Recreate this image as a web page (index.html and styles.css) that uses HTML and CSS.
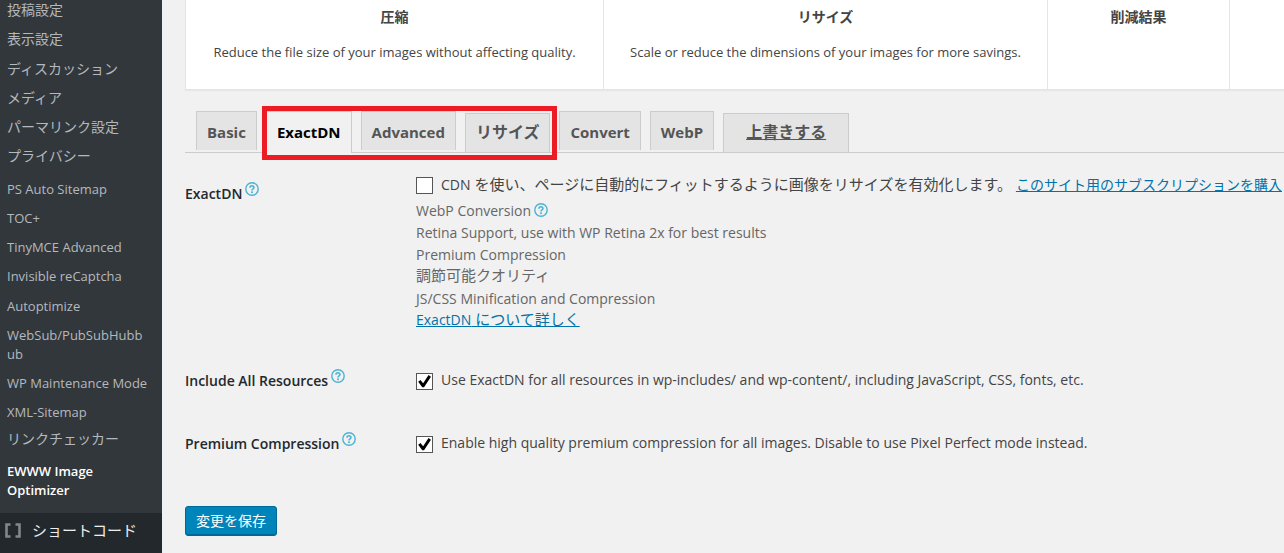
FILE: index.html
```html
<!DOCTYPE html>
<html lang="ja">
<head>
    <meta charset="UTF-8">
    <meta name="viewport" content="width=device-width, initial-scale=1.0">
    <title>EWWW Image Optimizer</title>
    <link rel="stylesheet" href="styles.css">
</head>
<body>
    <svg class="sprite" aria-hidden="true">
        <symbol id="help" viewBox="0 0 14 14">
            <circle cx="7" cy="7" r="6.2" fill="none" stroke="currentColor" stroke-width="1.4"/>
            <path d="M5 5.7C5 3.2 9 3.2 9 5.6C9 7 7 6.9 7 8.4" fill="none" stroke="currentColor" stroke-width="1.6"/>
            <rect x="6.1" y="9.4" width="1.8" height="1.7" fill="currentColor"/>
        </symbol>
    </svg>

    <div class="layout">
        <nav class="sidebar">
            <ul class="submenu">
                <li><a class="ja" href="#">投稿設定</a></li>
                <li><a class="ja" href="#">表示設定</a></li>
                <li><a class="ja" href="#">ディスカッション</a></li>
                <li><a class="ja" href="#">メディア</a></li>
                <li><a class="ja" href="#">パーマリンク設定</a></li>
                <li><a class="ja" href="#">プライバシー</a></li>
                <li><a href="#">PS Auto Sitemap</a></li>
                <li><a href="#">TOC+</a></li>
                <li><a href="#">TinyMCE Advanced</a></li>
                <li><a href="#">Invisible reCaptcha</a></li>
                <li><a href="#">Autoptimize</a></li>
                <li><a href="#">WebSub/PubSubHubbub</a></li>
                <li><a href="#">WP Maintenance Mode</a></li>
                <li><a href="#">XML-Sitemap</a></li>
                <li><a class="ja" href="#">リンクチェッカー</a></li>
                <li><a class="current" href="#">EWWW Image Optimizer</a></li>
            </ul>
            <a class="menu-top" href="#">
                <svg width="16" height="15" viewBox="0 0 16 15" aria-hidden="true">
                    <path d="M5.5 1.5H1.5V13.5H5.5M10.5 1.5H14.5V13.5H10.5" fill="none" stroke="currentColor" stroke-width="2.6"/>
                </svg>
                <span>ショートコード</span>
            </a>
        </nav>

        <main class="content">
            <section class="status">
                <div class="status-col">
                    <h3>圧縮</h3>
                    <p>Reduce the file size of your images without affecting quality.</p>
                </div>
                <div class="status-col">
                    <h3>リサイズ</h3>
                    <p>Scale or reduce the dimensions of your images for more savings.</p>
                </div>
                <div class="status-col">
                    <h3>削減結果</h3>
                </div>
                <div class="status-col"></div>
            </section>

            <nav class="tabs">
                <a class="tab" href="#">Basic</a>
                <a class="tab active" href="#">ExactDN</a>
                <a class="tab" href="#">Advanced</a>
                <a class="tab tab-ja" href="#">リサイズ</a>
                <a class="tab" href="#">Convert</a>
                <a class="tab" href="#">WebP</a>
                <a class="tab tab-ja tab-link" href="#"><span>上書きする</span></a>
                <span class="highlight"></span>
            </nav>

            <form>
                <table class="form-table">
                    <tr>
                        <th>
                            <label for="exactdn">ExactDN</label><a class="help" href="#" aria-label="Help"><svg><use href="#help"/></svg></a>
                        </th>
                        <td>
                            <div class="option">
                                <input type="checkbox" id="exactdn">
                                <label class="ja" for="exactdn"><span class="latin">CDN</span> を使い、ページに自動的にフィットするように画像をリサイズを有効化します。</label>
                                <a class="link" href="#">このサイト用のサブスクリプションを購入</a>
                            </div>
                            <ul class="features">
                                <li>WebP Conversion<a class="help help-inline" href="#" aria-label="Help"><svg><use href="#help"/></svg></a></li>
                                <li>Retina Support, use with WP Retina 2x for best results</li>
                                <li>Premium Compression</li>
                                <li class="ja">調節可能クオリティ</li>
                                <li>JS/CSS Minification and Compression</li>
                                <li class="ja"><a class="link" href="#"><span class="latin">ExactDN</span> について詳しく</a></li>
                            </ul>
                        </td>
                    </tr>
                    <tr>
                        <th>
                            <label for="resources">Include All Resources</label><a class="help" href="#" aria-label="Help"><svg><use href="#help"/></svg></a>
                        </th>
                        <td>
                            <div class="option">
                                <input type="checkbox" id="resources" checked>
                                <label for="resources">Use ExactDN for all resources in wp-includes/ and wp-content/, including JavaScript, CSS, fonts, etc.</label>
                            </div>
                        </td>
                    </tr>
                    <tr>
                        <th>
                            <label for="premium">Premium Compression</label><a class="help" href="#" aria-label="Help"><svg><use href="#help"/></svg></a>
                        </th>
                        <td>
                            <div class="option">
                                <input type="checkbox" id="premium" checked>
                                <label for="premium">Enable high quality premium compression for all images. Disable to use Pixel Perfect mode instead.</label>
                            </div>
                        </td>
                    </tr>
                </table>
                <button class="button-primary" type="submit">変更を保存</button>
            </form>
        </main>
    </div>
</body>
</html>
```

FILE: styles.css
```css
:root {
    --background: #f1f1f1;
    --menu: #32373c;
    --menu-dark: #23282d;
    --text: #444;
    --link: #0073aa;
    --help: #4db3d4;
    --border: #ccc;
}

* {
    margin: 0;
    padding: 0;
    box-sizing: border-box;
}

body {
    background: var(--background);
    color: var(--text);
    font-family: "Open Sans", "Noto Sans CJK JP", sans-serif;
    font-size: 14px;
    line-height: 22px;
    overflow-x: hidden;
}

ul {
    list-style: none;
}

.sprite {
    display: none;
}

.layout {
    display: flex;
    min-height: 100vh;
}

/* Admin menu */
.sidebar {
    display: flex;
    flex-direction: column;
    flex: 0 0 162px;
    background: var(--menu);
}

.submenu {
    display: flex;
    flex: 1;
    flex-direction: column;
    justify-content: space-between;
    padding-bottom: 7px;
}

.submenu a {
    display: block;
    padding: 4px 12px 6px 7px;
    color: #b4b9be;
    font-size: 13px;
    line-height: 19px;
    text-decoration: none;
    overflow-wrap: anywhere;
}

.submenu .ja {
    padding: 0 12px 10px 7px;
    font-size: 14px;
}

.submenu .current {
    color: #fff;
    font-weight: 600;
}

.menu-top {
    display: flex;
    align-items: center;
    gap: 11px;
    height: 40px;
    padding: 0 5px 6px;
    background: var(--menu-dark);
    color: #eee;
    font-size: 15px;
    text-decoration: none;
}

.menu-top svg {
    color: #82878c;
}

/* Status panel */
.content {
    flex: 1;
    min-width: 0;
    padding-left: 23px;
}

.status {
    display: grid;
    grid-template-columns: 418px 444px 182px 1fr;
    height: 90px;
    background: #fff;
    border: 1px solid #e5e5e5;
    border-top: 0;
    border-right: 0;
    box-shadow: 0 1px 1px rgba(0, 0, 0, 0.04);
    text-align: center;
}

.status-col {
    padding-top: 6px;
    border-right: 1px solid #e5e5e5;
}

.status-col:last-child {
    border-right: 0;
}

.status-col h3 {
    font-size: 14px;
    font-weight: 600;
}

.status-col p {
    margin-top: 13px;
    font-size: 13px;
}

/* Tabs */
.tabs {
    position: relative;
    display: flex;
    gap: 9px;
    height: 42px;
    margin-top: 21px;
    padding-left: 11px;
    border-bottom: 1px solid var(--border);
}

.tab {
    height: 39px;
    padding: 0 10px;
    background: #e4e4e4;
    border: 1px solid var(--border);
    border-bottom: 0;
    color: #555;
    font-size: 15px;
    font-weight: 700;
    line-height: 40px;
    text-decoration: none;
}

.tab.active {
    height: 42px;
    background: var(--background);
    color: #000;
}

.tab-ja {
    margin-top: 2px;
    font-size: 16px;
    line-height: 36px;
}

.tab-link {
    padding: 0 22px;
}

.tab-link span {
    text-decoration: underline;
    text-decoration-color: var(--link);
}

.highlight {
    position: absolute;
    top: -5px;
    left: 77px;
    width: 295px;
    height: 54px;
    border: 5px solid #ed1c24;
    pointer-events: none;
}

/* Settings form */
.form-table {
    width: 100%;
    margin-top: 10px;
    border-collapse: collapse;
    table-layout: fixed;
}

.form-table th {
    width: 231px;
    padding: 19px 0;
    color: #23282d;
    font-weight: 600;
    text-align: left;
    vertical-align: top;
    white-space: nowrap;
}

.form-table td {
    padding: 10px 0 17px;
    vertical-align: top;
}

.form-table tr + tr td {
    padding: 19px 0 22px;
}

.option {
    display: flex;
    align-items: center;
    gap: 4px;
    white-space: nowrap;
}

.option input {
    flex: none;
    appearance: none;
    width: 17px;
    height: 17px;
    margin: 2px 4px 0 0;
    background: #fff;
    border: 1px solid #555;
}

.option input:checked::before {
    content: "";
    display: block;
    width: 15px;
    height: 15px;
    background: #000;
    clip-path: polygon(8% 55%, 23% 43%, 41% 65%, 77% 10%, 93% 22%, 47% 92%, 35% 92%);
}

.ja {
    font-size: 15px;
}

.latin {
    font-size: 14px;
}

.features {
    margin-top: 4px;
    color: #666;
}

.features .ja {
    padding-bottom: 4px;
    line-height: 18px;
}

.link {
    color: var(--link);
    text-decoration: underline;
}

.help {
    display: inline-block;
    margin-left: 3px;
    color: var(--help);
    line-height: 14px;
    vertical-align: 3px;
}

.help svg {
    display: block;
    width: 14px;
    height: 14px;
}

.help-inline {
    vertical-align: -1px;
}

.button-primary {
    height: 30px;
    margin-top: 30px;
    padding: 0 10px;
    background: #0085ba;
    border: 1px solid #006799;
    border-radius: 3px;
    box-shadow: inset 0 -1px 0 #006799;
    color: #fff;
    font-family: inherit;
    font-size: 14px;
    line-height: 26px;
    cursor: pointer;
}
```
